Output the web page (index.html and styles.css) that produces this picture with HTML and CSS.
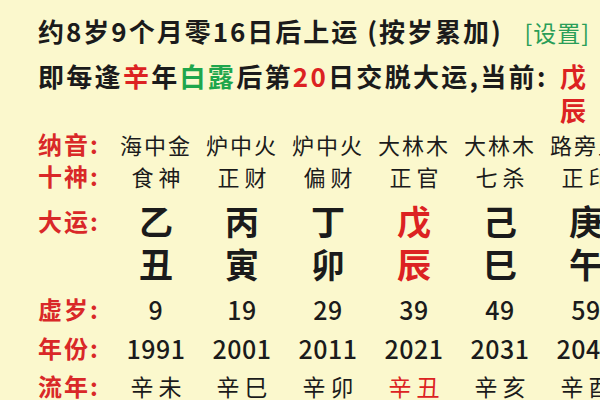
FILE: index.html
```html
<!DOCTYPE html>
<html lang="zh">
<head>
<meta charset="utf-8">
<link rel="stylesheet" href="styles.css">
</head>
<body>
<div class="page">
  <div class="header">
    <div class="line1">
      <span>约8岁9个月零16日后上运 (按岁累加)</span>
      <span class="settings">[设置]</span>
    </div>
    <div class="line2">
      <span>即每逢<span class="red">辛</span>年<span class="green">白露</span>后第<span class="red">20</span>日交脱大运,当前:</span>
      <span class="current red">戊<br>辰</span>
    </div>
  </div>
  <div class="table">
    <div class="row r-nayin">
      <span class="label">纳音:</span>
      <span>海中金</span><span>炉中火</span><span>炉中火</span><span>大林木</span><span>大林木</span><span>路旁土</span>
    </div>
    <div class="row r-shishen">
      <span class="label">十神:</span>
      <span>食神</span><span>正财</span><span>偏财</span><span>正官</span><span>七杀</span><span>正印</span>
    </div>
    <div class="row r-gz r-stem">
      <span class="label">大运:</span>
      <span>乙</span><span>丙</span><span>丁</span><span class="red">戊</span><span>己</span><span>庚</span>
    </div>
    <div class="row r-gz r-branch">
      <span class="label"></span>
      <span>丑</span><span>寅</span><span>卯</span><span class="red">辰</span><span>巳</span><span>午</span>
    </div>
    <div class="row r-num r-age">
      <span class="label">虚岁:</span>
      <span>9</span><span>19</span><span>29</span><span>39</span><span>49</span><span>59</span>
    </div>
    <div class="row r-num r-year">
      <span class="label">年份:</span>
      <span>1991</span><span>2001</span><span>2011</span><span>2021</span><span>2031</span><span>2041</span>
    </div>
    <div class="row r-liunian">
      <span class="label">流年:</span>
      <span>辛未</span><span>辛巳</span><span>辛卯</span><span class="red">辛丑</span><span>辛亥</span><span>辛酉</span>
    </div>
  </div>
</div>
</body>
</html>
```
FILE: styles.css
```css
html, body {
  margin: 0;
  padding: 0;
  background: #fbf8cd;
}
body {
  width: 600px;
  height: 400px;
  overflow: hidden;
  font-family: "Noto Sans CJK SC", "Noto Sans", sans-serif;
  color: #1b1b1b;
}
.page {
  padding: 11px 0 0 38px;
}
.red { color: #dc2222; }
.green { color: #1ea64c; }
.line1 {
  display: flex;
  justify-content: space-between;
  align-items: baseline;
  padding-right: 10px;
  font-size: 26px;
  font-weight: 700;
  letter-spacing: 2px;
  line-height: 40px;
  white-space: nowrap;
}
.settings {
  color: #2a9e58;
  font-size: 23px;
  font-weight: 400;
  letter-spacing: 1px;
}
.line2 {
  display: flex;
  justify-content: space-between;
  padding-right: 14px;
  font-size: 26px;
  font-weight: 700;
  letter-spacing: 2.3px;
  line-height: 40px;
  margin-top: 4px;
  white-space: nowrap;
}
.current {
  letter-spacing: 0;
  line-height: 34px;
  margin-top: 3px;
}
.table {
  margin-top: 1px;
}
.row {
  display: grid;
  grid-template-columns: 75px repeat(6, 86px);
  align-items: center;
  white-space: nowrap;
  line-height: 28px;
}
.row > span {
  text-align: center;
}
.row > .label {
  text-align: left;
  color: #d92828;
  font-size: 24px;
  font-weight: 700;
  letter-spacing: 2px;
}
.r-nayin { height: 31px; font-size: 22px; letter-spacing: 2px; }
.r-shishen { height: 30px; margin-top: 2px; font-size: 22px; letter-spacing: 5px; }
.r-shishen > span:not(.label) { padding-left: 5px; }
.r-gz { height: 40px; font-size: 34px; font-weight: 700; line-height: 38px; }
.r-stem { margin-top: 10px; }
.r-branch { margin-top: 3px; }
.r-num { font-size: 25px; font-weight: 500; letter-spacing: 0.5px; }
.r-age { height: 40px; margin-top: 5px; }
.r-year { height: 38px; }
.r-liunian { height: 38px; font-size: 23px; letter-spacing: 5px; }
.r-liunian > span:not(.label) { padding-left: 5px; }
```
